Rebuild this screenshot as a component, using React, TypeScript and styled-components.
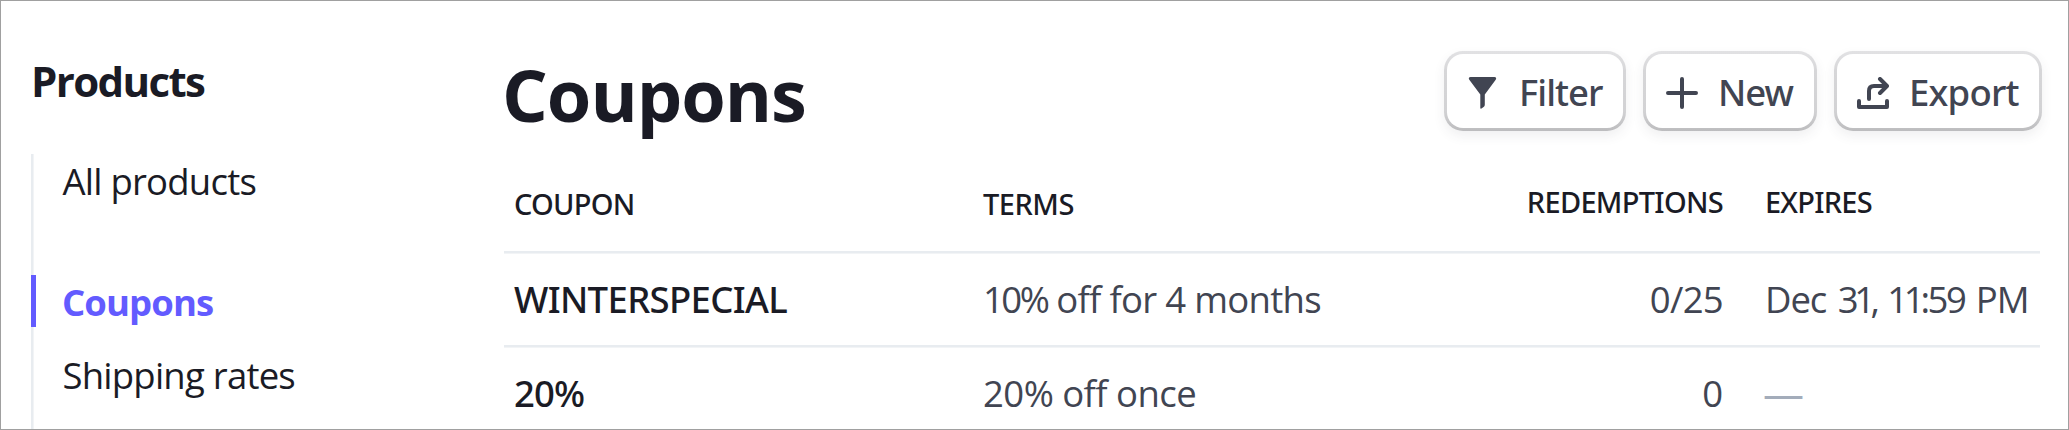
import React from 'react';
import styled, { createGlobalStyle } from 'styled-components';

const ink = '#1a1b25';
const muted = '#414552';
const accent = '#635bff';
const rule = '#e8ecf0';
const ruleSoft = '#f2f4f6';

const GlobalStyle = createGlobalStyle`
  *, *::before, *::after { box-sizing: border-box; }
  body {
    margin: 0;
    background: #fff;
    color: ${ink};
    font-family: 'Open Sans', 'Noto Sans', sans-serif;
  }
`;

const Page = styled.div`
  display: flex;
  height: 430px;
  overflow: hidden;
  border: 1px solid #a0a0a0;
  background: #fff;
`;

const Sidebar = styled.aside`
  display: flex;
  flex-direction: column;
  width: 503px;
  flex: none;
  padding: 55px 0 0 30px;
`;

const SidebarTitle = styled.h2`
  margin: 0 0 48px;
  font-size: 42px;
  line-height: 50px;
  font-weight: 700;
  letter-spacing: -1.64px;
`;

const NavList = styled.nav`
  display: flex;
  flex: 1;
  flex-direction: column;
  align-items: flex-start;
  padding-top: 1px;
  border-left: 2px solid ${rule};
  box-shadow: inset 1px 0 ${ruleSoft};
`;

const NavItem = styled.a<{ $active?: boolean; $gap?: number }>`
  flex: none;
  height: 52px;
  margin-top: ${p => p.$gap ?? 0}px;
  margin-left: -2px;
  padding-left: ${p => (p.$active ? 26 : 31.5)}px;
  border-left: ${p => (p.$active ? `5px solid ${accent}` : '0')};
  color: ${p => (p.$active ? accent : ink)};
  font-size: 36.5px;
  line-height: ${p => (p.$active ? 54 : 52)}px;
  font-weight: ${p => (p.$active ? 700 : 450)};
  letter-spacing: ${p => (p.$active ? -0.92 : -0.77)}px;
  white-space: nowrap;
`;

const Main = styled.main`
  width: 1538px;
  flex: none;
`;

const Header = styled.header`
  display: flex;
  align-items: flex-start;
  justify-content: space-between;
  height: 139px;
  padding-top: 50px;
`;

const Title = styled.h1`
  margin: 3px 0 0 -2px;
  font-size: 72px;
  line-height: 80px;
  font-weight: 700;
  letter-spacing: -1.04px;
`;

const Actions = styled.div`
  display: flex;
  gap: 17px;
`;

const Button = styled.button<{ $width: number; $track: number }>`
  display: flex;
  align-items: center;
  gap: 20px;
  width: ${p => p.$width}px;
  height: 80px;
  padding: 2px 0 0 20px;
  border: 3px solid transparent;
  border-radius: 19px;
  background:
    linear-gradient(#fff, #fff) padding-box,
    linear-gradient(#e2e2e4, #d6d6d8 25%, #d2d2d4 75%, #bcbcbe) border-box;
  box-shadow: 0 5px 12px rgba(64, 68, 82, 0.08);
  color: ${muted};
  font: 500 36.5px/50px 'Noto Sans', 'Open Sans', sans-serif;
  letter-spacing: ${p => p.$track}px;
  white-space: nowrap;
`;

const Icon = styled.svg`
  width: 32px;
  height: 32px;
  flex: none;
  margin-top: 2px;
`;

const Row = styled.div<{ $head?: boolean }>`
  display: grid;
  grid-template-columns: 469px 740px 1fr;
  width: 1536px;
  height: ${p => (p.$head ? 113 : 94)}px;
  padding: ${p => (p.$head ? 46 : 21)}px 0 0 10px;
  border-bottom: 2px solid ${rule};
  box-shadow: 0 1px ${ruleSoft};
  font-family: ${p => (p.$head ? "'Noto Sans', 'Open Sans'" : "'Open Sans', 'Noto Sans'")}, sans-serif;
  font-size: ${p => (p.$head ? 29 : 36.5)}px;
  line-height: ${p => (p.$head ? 36 : 50)}px;
  font-weight: ${p => (p.$head ? 500 : 450)};
  color: ${p => (p.$head ? ink : muted)};
  white-space: nowrap;
`;

const Cell = styled.div<{ $track?: number; $strong?: boolean; $lift?: number }>`
  margin-top: -${p => p.$lift ?? 0}px;
  letter-spacing: ${p => p.$track ?? 0}px;
  ${p => p.$strong && `color: ${ink}; font-family: 'Noto Sans', 'Open Sans', sans-serif; font-weight: 500;`}
`;

const Split = styled.div`
  display: flex;
  justify-content: space-between;
`;

const LastCell = styled(Cell)`
  padding-left: 42px;
  word-spacing: 2px;
`;

const Run = styled.span<{ $track: number }>`
  letter-spacing: ${p => p.$track}px;
`;

const Dash = styled.span`
  display: block;
  margin: -1px 0 0 -2px;
  color: #a3acba;
  font-size: 41px;
  font-weight: 450;
`;

const FilterIcon = () => (
  <Icon viewBox="0 0 32 32" fill={muted}>
    <path d="M3.6 0H27.4C29.3 0 29.6 1.5 28.7 2.8L17.8 17.6V27.5C17.8 28.7 17.4 29.3 16.6 30L14.4 31.6C13.8 32 13.3 31.7 13.3 31V17.6L2.3 2.8C1.4 1.5 1.7 0 3.6 0Z" />
  </Icon>
);

const PlusIcon = () => (
  <Icon viewBox="0 0 32 32" fill="none" stroke={muted} strokeWidth="4" strokeLinecap="round">
    <path d="M16 2V30M2 16H30" />
  </Icon>
);

const ExportIcon = () => (
  <Icon viewBox="0 0 32 32" fill="none" stroke={muted} strokeWidth="4" strokeLinecap="round" strokeLinejoin="round">
    <path d="M2 24V30H30V24" />
    <path d="M12 22V14C12 10.5 13.5 9 17 9H29" />
    <path d="M23 2L30 9L23 16" />
  </Icon>
);

export default function App() {
  return (
    <>
      <GlobalStyle />
      <Page>
        <Sidebar>
          <SidebarTitle>Products</SidebarTitle>
          <NavList>
            <NavItem>All products</NavItem>
            <NavItem $active $gap={68}>Coupons</NavItem>
            <NavItem $gap={22}>Shipping rates</NavItem>
          </NavList>
        </Sidebar>
        <Main>
          <Header>
            <Title>Coupons</Title>
            <Actions>
              <Button $width={182} $track={-1}><FilterIcon />Filter</Button>
              <Button $width={174} $track={-1}><PlusIcon />New</Button>
              <Button $width={208} $track={-0.8}><ExportIcon />Export</Button>
            </Actions>
          </Header>
          <Row $head>
            <Cell $track={-0.75}>COUPON</Cell>
            <Split>
              <Cell $track={-0.5}>TERMS</Cell>
              <Cell $track={-0.7} $lift={2}>REDEMPTIONS</Cell>
            </Split>
            <LastCell $track={-0.78} $lift={2}>EXPIRES</LastCell>
          </Row>
          <Row>
            <Cell $strong $track={-0.66}>WINTERSPECIAL</Cell>
            <Split>
              <Cell $track={-0.7}><Run $track={-2.5}>10%</Run> off for 4 months</Cell>
              <Cell $track={-0.7}>0/25</Cell>
            </Split>
            <LastCell>
              <Run $track={-1.1}>Dec</Run> <Run $track={-4.4}>31,</Run> <Run $track={-4.2}>11</Run>
              <Run $track={-2.5}>:59</Run> <Run $track={-1}>PM</Run>
            </LastCell>
          </Row>
          <Row>
            <Cell $strong $track={-0.9}>20%</Cell>
            <Split>
              <Cell $track={-0.55}>20% off once</Cell>
              <Cell>0</Cell>
            </Split>
            <LastCell><Dash>—</Dash></LastCell>
          </Row>
        </Main>
      </Page>
    </>
  );
}
